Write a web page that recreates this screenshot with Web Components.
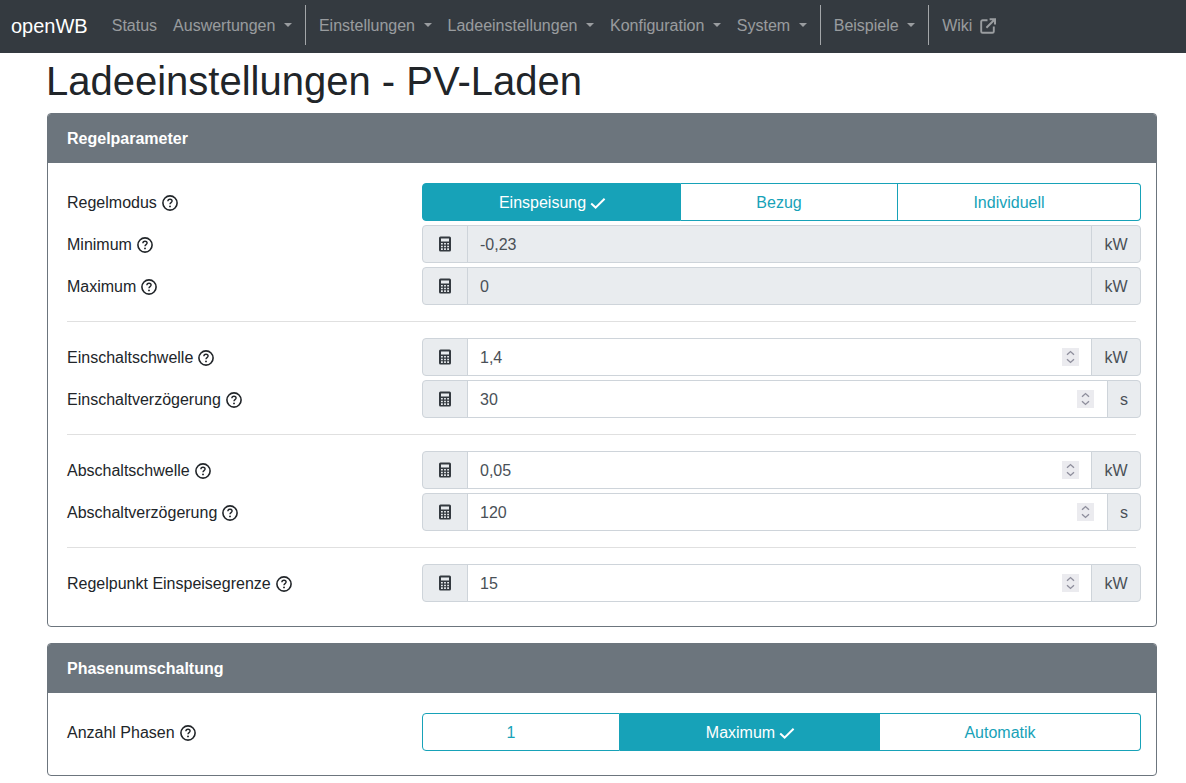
<!DOCTYPE html>
<html lang="de">
<head>
<meta charset="utf-8">
<title>openWB</title>
<style>
    body {
        margin: 0;
        font-family: "Liberation Sans", Arial, sans-serif;
        font-size: 16px;
        line-height: 24px;
        color: #212529;
        background: #ffffff;
    }
    main {
        width: 1110px;
        margin-left: 47px;
    }
    h1 {
        margin: 0 0 0 -1px;
        padding: 4px 0 8px;
        font-size: 40px;
        line-height: 48px;
        font-weight: 400;
    }
</style>
</head>
<body>
<ob-navbar>
    <ob-nav-item>Status</ob-nav-item>
    <ob-nav-item dropdown>Auswertungen</ob-nav-item>
    <ob-nav-divider></ob-nav-divider>
    <ob-nav-item dropdown>Einstellungen</ob-nav-item>
    <ob-nav-item dropdown>Ladeeinstellungen</ob-nav-item>
    <ob-nav-item dropdown>Konfiguration</ob-nav-item>
    <ob-nav-item dropdown>System</ob-nav-item>
    <ob-nav-divider></ob-nav-divider>
    <ob-nav-item dropdown>Beispiele</ob-nav-item>
    <ob-nav-divider></ob-nav-divider>
    <ob-nav-item external>Wiki</ob-nav-item>
</ob-navbar>
<main>
    <h1>Ladeeinstellungen - PV-Laden</h1>
    <ob-card heading="Regelparameter">
        <ob-row label="Regelmodus">
            <ob-button-group columns="259px 217px 243px" options="Einspeisung|Bezug|Individuell" selected="0"></ob-button-group>
        </ob-row>
        <ob-row label="Minimum"><ob-number-input value="-0,23" unit="kW" disabled></ob-number-input></ob-row>
        <ob-row label="Maximum"><ob-number-input value="0" unit="kW" disabled></ob-number-input></ob-row>
        <ob-separator></ob-separator>
        <ob-row label="Einschaltschwelle"><ob-number-input value="1,4" unit="kW"></ob-number-input></ob-row>
        <ob-row label="Einschaltverzögerung"><ob-number-input value="30" unit="s"></ob-number-input></ob-row>
        <ob-separator></ob-separator>
        <ob-row label="Abschaltschwelle"><ob-number-input value="0,05" unit="kW"></ob-number-input></ob-row>
        <ob-row label="Abschaltverzögerung"><ob-number-input value="120" unit="s"></ob-number-input></ob-row>
        <ob-separator></ob-separator>
        <ob-row label="Regelpunkt Einspeisegrenze"><ob-number-input value="15" unit="kW"></ob-number-input></ob-row>
    </ob-card>
    <ob-card heading="Phasenumschaltung">
        <ob-row label="Anzahl Phasen">
            <ob-button-group columns="198px 260px 261px" options="1|Maximum|Automatik" selected="1"></ob-button-group>
        </ob-row>
    </ob-card>
</main>

<script>
class ObNavbar extends HTMLElement {
    constructor() {
        super();
        this.attachShadow({mode: "open"}).innerHTML = `
            <style>
                :host {
                    display: flex;
                    align-items: center;
                    height: 53px;
                    padding-left: 11px;
                    background: #343a40;
                }
                .brand {
                    margin-right: 16px;
                    padding-bottom: 2px;
                    font-size: 20px;
                    line-height: 30px;
                    color: #ffffff;
                }
            </style>
            <span class="brand">openWB</span>
            <slot></slot>
        `;
    }
}

class ObNavItem extends HTMLElement {
    constructor() {
        super();
        const caret = this.hasAttribute("dropdown") ? `<span class="caret"></span>` : "";
        const external = this.hasAttribute("external") ? `
            <svg viewBox="0 0 16 16" width="16" height="16" fill="none" stroke="currentColor" stroke-width="1.9">
                <path d="M7.5 2.2H2.6A1.4 1.4 0 0 0 1.2 3.6v9.8a1.4 1.4 0 0 0 1.4 1.4h9.8a1.4 1.4 0 0 0 1.4-1.4V8.6"/>
                <path d="M6.4 9.8 14.4 1.8M9.6 1.2h5.4v5.4" stroke-width="2"/>
            </svg>` : "";
        this.attachShadow({mode: "open"}).innerHTML = `
            <style>
                :host {
                    display: flex;
                    align-items: center;
                    padding: 0 8px 2px;
                    color: rgba(255, 255, 255, 0.5);
                    white-space: nowrap;
                }
                .caret {
                    width: 0;
                    height: 0;
                    margin-left: 8.55px;
                    margin-top: -1px;
                    border-top: 4.8px solid currentColor;
                    border-left: 4.8px solid transparent;
                    border-right: 4.8px solid transparent;
                }
                svg {
                    margin-left: 8px;
                }
            </style>
            <slot></slot>${caret}${external}
        `;
    }
}

class ObNavDivider extends HTMLElement {
    constructor() {
        super();
        this.attachShadow({mode: "open"}).innerHTML = `
            <style>
                :host {
                    display: block;
                    width: 1px;
                    height: 40px;
                    margin: 0 5px 3px 5px;
                    background: rgba(255, 255, 255, 0.55);
                }
            </style>
        `;
    }
}

class ObCard extends HTMLElement {
    constructor() {
        super();
        this.attachShadow({mode: "open"}).innerHTML = `
            <style>
                :host {
                    display: block;
                    margin-bottom: 16px;
                    border: 1px solid #6c757d;
                    border-radius: 4px;
                    overflow: hidden;
                }
                header {
                    height: 49px;
                    padding: 0 19px;
                    background: #6c757d;
                    color: #ffffff;
                    font-weight: 700;
                    line-height: 49px;
                }
                .body {
                    display: flex;
                    flex-direction: column;
                    gap: 4px;
                    padding: 20px 15px 24px 19px;
                }
            </style>
            <header>${this.getAttribute("heading")}</header>
            <div class="body"><slot></slot></div>
        `;
    }
}

class ObRow extends HTMLElement {
    constructor() {
        super();
        this.attachShadow({mode: "open"}).innerHTML = `
            <style>
                :host {
                    display: grid;
                    grid-template-columns: 355px 719px;
                    align-items: center;
                }
                .label {
                    display: flex;
                    align-items: center;
                    gap: 5px;
                    padding-top: 2px;
                }
                svg {
                    flex: none;
                }
            </style>
            <div class="label">
                <span>${this.getAttribute("label")}</span>
                <svg viewBox="0 0 16 16" width="16" height="16" fill="none" stroke="#212529">
                    <circle cx="8" cy="8" r="7.1" stroke-width="1.6"/>
                    <path d="M5.9 6.3C5.9 5 6.8 4.3 8 4.3s2.1.7 2.1 1.8c0 1.5-2.1 1.6-2.1 3.1" stroke-width="1.4"/>
                    <circle cx="8" cy="11.4" r="0.95" fill="#212529" stroke="none"/>
                </svg>
            </div>
            <slot></slot>
        `;
    }
}

class ObSeparator extends HTMLElement {
    constructor() {
        super();
        this.attachShadow({mode: "open"}).innerHTML = `
            <style>
                :host {
                    display: block;
                    width: 1069px;
                    height: 1px;
                    margin: 12px 0;
                    background: rgba(0, 0, 0, 0.12);
                }
            </style>
        `;
    }
}

class ObButtonGroup extends HTMLElement {
    constructor() {
        super();
        const selected = Number(this.getAttribute("selected"));
        // the check keeps its room on every button, only the selected one shows it
        const buttons = this.getAttribute("options").split("|").map((option, index) => `
            <button class="${index === selected ? "active" : ""}">
                <span>${option}</span>
                <svg viewBox="0 0 16 16" width="16" height="16" fill="none" stroke="currentColor" stroke-width="2">
                    <path d="M1.2 8.6 5.6 12.6 14.6 3.8"/>
                </svg>
            </button>`).join("");
        this.attachShadow({mode: "open"}).innerHTML = `
            <style>
                :host {
                    display: grid;
                    grid-template-columns: ${this.getAttribute("columns")};
                    height: 38px;
                }
                button {
                    display: flex;
                    align-items: center;
                    justify-content: center;
                    gap: 4px;
                    padding: 2px 0 0;
                    border: 1px solid #17a2b8;
                    border-left-width: 0;
                    background: #ffffff;
                    color: #17a2b8;
                    font: inherit;
                }
                button:first-of-type {
                    border-left-width: 1px;
                    border-radius: 4px 0 0 4px;
                }
                button:last-of-type {
                    border-radius: 0 4px 4px 0;
                }
                button svg {
                    visibility: hidden;
                }
                button.active {
                    padding-left: 2px;
                    background: #17a2b8;
                    color: #ffffff;
                }
                button.active svg {
                    visibility: visible;
                }
            </style>
            ${buttons}
        `;
    }
}

class ObNumberInput extends HTMLElement {
    constructor() {
        super();
        const disabled = this.hasAttribute("disabled");
        const wide = this.getAttribute("unit") === "kW";
        const spinner = disabled ? "" : `
            <svg class="spin" viewBox="0 0 17 18" width="17" height="18" fill="none" stroke="#8f8f9d" stroke-width="1.4">
                <rect width="17" height="18" fill="#ebebef" stroke="none"/>
                <path d="M5 6.8 8.5 3.6 12 6.8M5 11.2 8.5 14.4 12 11.2"/>
            </svg>`;
        this.attachShadow({mode: "open"}).innerHTML = `
            <style>
                :host {
                    display: flex;
                    height: 38px;
                    color: #495057;
                }
                .addon {
                    display: flex;
                    align-items: center;
                    justify-content: center;
                    flex: none;
                    box-sizing: border-box;
                    border: 1px solid #ced4da;
                    background: #e9ecef;
                }
                .prepend {
                    width: 46px;
                    border-radius: 4px 0 0 4px;
                }
                .append {
                    width: ${wide ? 50 : 34}px;
                    margin-left: -1px;
                    padding-top: 2px;
                    border-radius: 0 4px 4px 0;
                }
                .field {
                    display: flex;
                    align-items: center;
                    justify-content: space-between;
                    flex: 1;
                    margin-left: -1px;
                    padding: 0 ${wide ? 12 : 13}px 0 12px;
                    border: 1px solid #ced4da;
                    background: ${disabled ? "#e9ecef" : "#ffffff"};
                }
                .field span {
                    padding-top: 2px;
                }
            </style>
            <div class="addon prepend">
                <svg viewBox="0 0 12 16" width="12" height="16">
                    <path fill="#343a40" fill-rule="evenodd" d="M1.5 0.5h9A1.5 1.5 0 0 1 12 2v12a1.5 1.5 0 0 1-1.5 1.5h-9A1.5 1.5 0 0 1 0 14V2A1.5 1.5 0 0 1 1.5 0.5ZM2 2.5v3h8v-3ZM2 7v1.6h1.8V7ZM5.1 7v1.6h1.8V7ZM8.2 7v1.6H10V7ZM2 9.7v1.6h1.8V9.7ZM5.1 9.7v1.6h1.8V9.7ZM8.2 9.7v1.6H10V9.7ZM2 12.3v1.6h1.8v-1.6ZM5.1 12.3v1.6h1.8v-1.6ZM8.2 12.3v1.6H10v-1.6Z"/>
                </svg>
            </div>
            <div class="field"><span>${this.getAttribute("value")}</span>${spinner}</div>
            <div class="addon append">${this.getAttribute("unit")}</div>
        `;
    }
}

customElements.define("ob-navbar", ObNavbar);
customElements.define("ob-nav-item", ObNavItem);
customElements.define("ob-nav-divider", ObNavDivider);
customElements.define("ob-card", ObCard);
customElements.define("ob-row", ObRow);
customElements.define("ob-separator", ObSeparator);
customElements.define("ob-button-group", ObButtonGroup);
customElements.define("ob-number-input", ObNumberInput);
</script>
</body>
</html>
